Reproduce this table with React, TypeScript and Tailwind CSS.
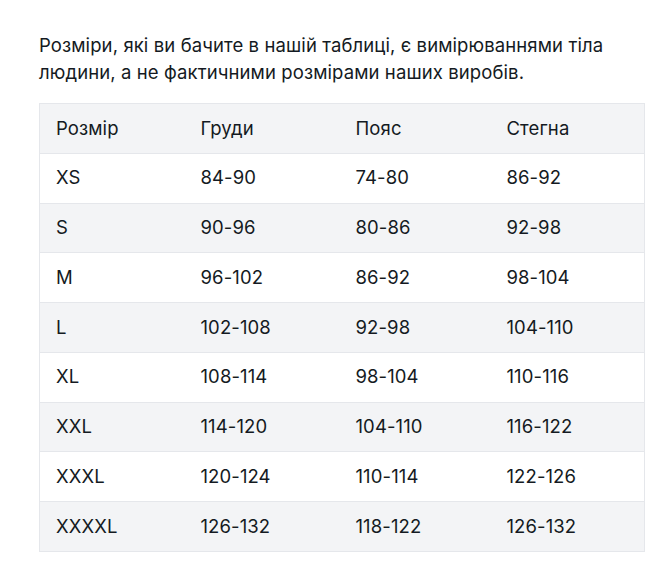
const rows = [
  ["XS", "84-90", "74-80", "86-92"],
  ["S", "90-96", "80-86", "92-98"],
  ["M", "96-102", "86-92", "98-104"],
  ["L", "102-108", "92-98", "104-110"],
  ["XL", "108-114", "98-104", "110-116"],
  ["XXL", "114-120", "104-110", "116-122"],
  ["XXXL", "120-124", "110-114", "122-126"],
  ["XXXXL", "126-132", "118-122", "126-132"],
];

export default function App() {
  return (
    <div className="min-h-[577px] bg-white px-[39px] pt-[32px] text-[18.5px] tracking-[0.1px] text-[#141a22] [font-family:Inter,'Noto_Sans',sans-serif]">
      <p className="leading-[27px]">
        Розміри, які ви бачите в нашій таблиці, є вимірюваннями тіла людини, а не фактичними розмірами наших виробів.
      </p>
      <table className="mt-[17px] w-[606px] table-fixed border-collapse border border-[#e5e7eb]">
        <colgroup>
          <col className="w-[145px]" />
          <col className="w-[155px]" />
          <col className="w-[151px]" />
          <col />
        </colgroup>
        <thead>
          <tr className="border-b border-[#e5e7eb] bg-[#f3f4f6]">
            {["Розмір", "Груди", "Пояс", "Стегна"].map((h) => (
              <th key={h} className="h-[49.75px] px-4 text-left font-normal">
                {h}
              </th>
            ))}
          </tr>
        </thead>
        <tbody>
          {rows.map((r, i) => (
            <tr key={r[0]} className={`border-b border-[#e5e7eb] ${i % 2 === 1 ? "bg-[#f3f4f6]" : "bg-white"}`}>
              {r.map((c, j) => (
                <td key={j} className="h-[49.75px] px-4">
                  {c}
                </td>
              ))}
            </tr>
          ))}
        </tbody>
      </table>
    </div>
  );
}
